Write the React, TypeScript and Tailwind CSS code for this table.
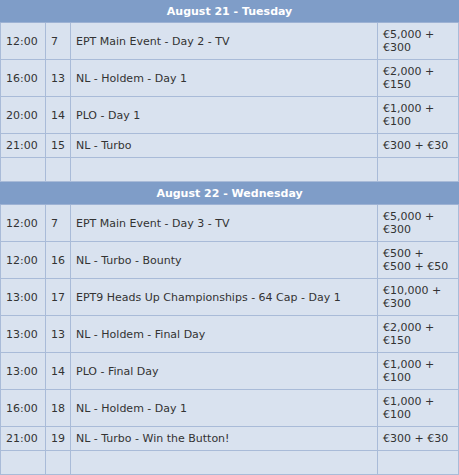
import React from 'react';

type Event = { time: string; id: string; name: string; price: string };

const days: { title: string; events: Event[] }[] = [
  {
    title: 'August 21 - Tuesday',
    events: [
      { time: '12:00', id: '7', name: 'EPT Main Event - Day 2 - TV', price: '€5,000 + €300' },
      { time: '16:00', id: '13', name: 'NL - Holdem - Day 1', price: '€2,000 + €150' },
      { time: '20:00', id: '14', name: 'PLO - Day 1', price: '€1,000 + €100' },
      { time: '21:00', id: '15', name: 'NL - Turbo', price: '€300 + €30' },
    ],
  },
  {
    title: 'August 22 - Wednesday',
    events: [
      { time: '12:00', id: '7', name: 'EPT Main Event - Day 3 - TV', price: '€5,000 + €300' },
      { time: '12:00', id: '16', name: 'NL - Turbo - Bounty', price: '€500 + €500 + €50' },
      { time: '13:00', id: '17', name: 'EPT9 Heads Up Championships - 64 Cap - Day 1', price: '€10,000 + €300' },
      { time: '13:00', id: '13', name: 'NL - Holdem - Final Day', price: '€2,000 + €150' },
      { time: '13:00', id: '14', name: 'PLO - Final Day', price: '€1,000 + €100' },
      { time: '16:00', id: '18', name: 'NL - Holdem - Day 1', price: '€1,000 + €100' },
      { time: '21:00', id: '19', name: 'NL - Turbo - Win the Button!', price: '€300 + €30' },
    ],
  },
];

const cell = 'border-r border-b border-[#a9bbd8] px-[5px] py-[5px] align-middle';

export default function App() {
  return (
    <div className="w-[459px] h-[475px] overflow-hidden bg-white">
      <table
        className="w-[459px] table-fixed border-separate border-spacing-0 text-[11px] leading-[13px] text-[#333333]"
        style={{ fontFamily: '"DejaVu Sans", Verdana, sans-serif' }}
      >
        <colgroup>
          <col className="w-[46px]" />
          <col className="w-[25px]" />
          <col className="w-[307px]" />
          <col className="w-[81px]" />
        </colgroup>
        <tbody>
          {days.map((day) => (
            <React.Fragment key={day.title}>
              <tr>
                <td colSpan={4} className="h-[23px] bg-[#7f9dc8] border-b border-[#9db2d4] text-center font-bold text-white p-0">
                  {day.title}
                </td>
              </tr>
              {day.events.map((ev, i) => (
                <tr key={i} className="bg-[#d9e2ef]">
                  <td className={`${cell} border-l`}>{ev.time}</td>
                  <td className={cell}>{ev.id}</td>
                  <td className={cell}>{ev.name}</td>
                  <td className={cell}>{ev.price}</td>
                </tr>
              ))}
              <tr className="bg-[#d9e2ef]">
                <td className={`${cell} border-l`}>&nbsp;</td>
                <td className={cell}>&nbsp;</td>
                <td className={cell}>&nbsp;</td>
                <td className={cell}>&nbsp;</td>
              </tr>
            </React.Fragment>
          ))}
        </tbody>
      </table>
    </div>
  );
}
